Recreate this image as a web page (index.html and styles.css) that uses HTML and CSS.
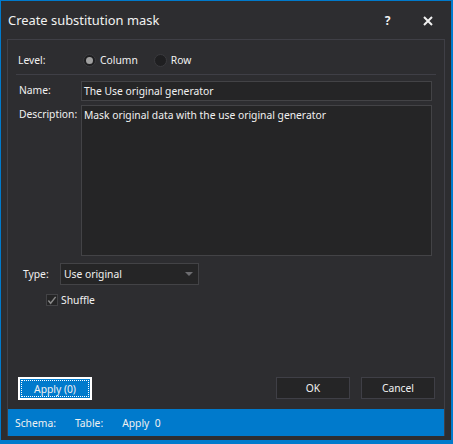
FILE: index.html
```html
<!DOCTYPE html>
<html lang="en">
<head>
  <meta charset="UTF-8" />
  <title>Create substitution mask</title>
  <link rel="stylesheet" href="styles.css">
</head>
<body>
  <div class="window">
    <div class="titlebar">
      <span class="title">Create substitution mask</span>
      <span class="title-btn help">?</span>
      <span class="title-btn close">
        <svg width="10" height="10" viewBox="0 0 10 10"><path d="M1 1 L9 9 M9 1 L1 9" stroke="#f1f1f1" stroke-width="2"/></svg>
      </span>
    </div>

    <div class="panel">
      <div class="form">
        <div class="level-row">
          <span class="label level-label">Level:</span>
          <span class="radio checked"></span><span class="radio-text">Column</span>
          <span class="radio"></span><span class="radio-text">Row</span>
        </div>
        <div class="separator"></div>

        <div class="field-row">
          <span class="label">Name:</span>
          <div class="input">The Use original generator</div>
        </div>
        <div class="field-row">
          <span class="label">Description:</span>
          <div class="input textarea">Mask original data with the use original generator</div>
        </div>

        <div class="type-row">
          <span class="label">Type:</span>
          <div class="select">
            <span>Use original</span>
            <span class="caret"></span>
          </div>
        </div>

        <div class="check-row">
          <span class="checkbox">
            <svg width="11" height="11" viewBox="0 0 11 11"><path d="M1.5 5.5 L4 8.5 L9.5 1.5" fill="none" stroke="#8a8a8a" stroke-width="1.6"/></svg>
          </span>
          <span>Shuffle</span>
        </div>

        <div class="spacer"></div>

        <div class="buttons">
          <button class="btn primary"><span class="focus">Apply (0)</span></button>
          <div class="right-buttons">
            <button class="btn">OK</button>
            <button class="btn">Cancel</button>
          </div>
        </div>
      </div>

      <div class="statusbar">
        <span>Schema:</span>
        <span>Table:</span>
        <span>Apply&nbsp; 0</span>
      </div>
    </div>
  </div>
</body>
</html>
```

FILE: styles.css
```css
* {
  box-sizing: border-box;
}

body {
  margin: 0;
  background-color: #2d2d30;
  font-family: "Segoe UI", "Noto Sans", sans-serif;
  font-size: 10.3px;
  color: #f1f1f1;
}

.window {
  width: 453px;
  height: 444px;
  border: 1px solid #007acc;
  border-width: 1px 2px 4px 1px;
  background-color: #2d2d30;
  display: flex;
  flex-direction: column;
}

.titlebar {
  height: 38px;
  display: flex;
  align-items: center;
  padding-left: 7px;
}

.title {
  font-size: 12.9px;
  flex-grow: 1;
}

.title-btn {
  width: 39px;
  text-align: center;
  font-weight: bold;
  font-size: 12px;
}

.help {
  margin-right: 1px;
}

.close {
  margin-right: 4px;
  padding-top: 3px;
}

.panel {
  flex-grow: 1;
  margin: 0 6px 4px 6px;
  border: 1px solid #3f3f46;
  border-bottom: none;
  display: flex;
  flex-direction: column;
}

.form {
  flex-grow: 1;
  display: flex;
  flex-direction: column;
  padding: 10px 9px 9px 10px;
}

.level-row {
  display: flex;
  align-items: center;
  height: 20px;
}

.level-label {
  width: 65px;
}

.radio {
  width: 13px;
  height: 13px;
  border-radius: 50%;
  background: #1f1f21;
  border: 1px solid #3a3a3e;
  display: flex;
  align-items: center;
  justify-content: center;
  margin-right: 4px;
}

.radio.checked::after {
  content: "";
  width: 7px;
  height: 7px;
  border-radius: 50%;
  background: #a0a0a0;
}

.radio-text {
  margin-right: 16px;
}

.separator {
  height: 1px;
  background: #3f3f46;
  margin: 4px -1px 6px -2px;
}

.field-row {
  display: flex;
  align-items: flex-start;
  margin-bottom: 4px;
  padding-left: 1px;
}

.field-row .label {
  width: 62px;
  padding-top: 2px;
}

.input {
  flex-grow: 1;
  height: 20px;
  background: #252526;
  border: 1px solid #434346;
  padding: 2px 2px;
  margin-right: 3px;
}

.textarea {
  height: 151px;
  padding-top: 2px;
}

.type-row {
  display: flex;
  align-items: center;
  margin-top: 3px;
  padding-left: 5px;
}

.type-row .label {
  width: 37px;
}

.select {
  width: 139px;
  height: 22px;
  background: #252526;
  border: 1px solid #434346;
  display: flex;
  align-items: center;
  justify-content: space-between;
  padding: 0 5px 0 3px;
}

.caret {
  width: 0;
  height: 0;
  border-left: 4px solid transparent;
  border-right: 4px solid transparent;
  border-top: 4px solid #6d6d70;
}

.check-row {
  display: flex;
  align-items: center;
  gap: 3px;
  margin-top: 8px;
  padding-left: 28px;
}

.checkbox {
  width: 12px;
  height: 12px;
  background: #252526;
  border: 1px solid #434346;
  display: flex;
  align-items: center;
  justify-content: center;
}

.spacer {
  flex-grow: 1;
}

.buttons {
  display: flex;
  justify-content: space-between;
}

.right-buttons {
  display: flex;
  gap: 11px;
}

.btn {
  width: 74px;
  height: 22px;
  background: #252526;
  border: 1px solid #3f3f46;
  color: #f1f1f1;
  font-family: inherit;
  font-size: 10.3px;
  padding: 0;
}

.btn.primary {
  background: #007acc;
  border: 2px solid #ffffff;
  padding: 1px;
  height: 23px;
}

.focus {
  display: flex;
  align-items: center;
  justify-content: center;
  height: 100%;
  border: 1px dotted #ffffff;
}

.statusbar {
  height: 27px;
  background: #007acc;
  display: flex;
  align-items: center;
  gap: 19px;
  padding-left: 7px;
  color: #f1f1f1;
}
```
